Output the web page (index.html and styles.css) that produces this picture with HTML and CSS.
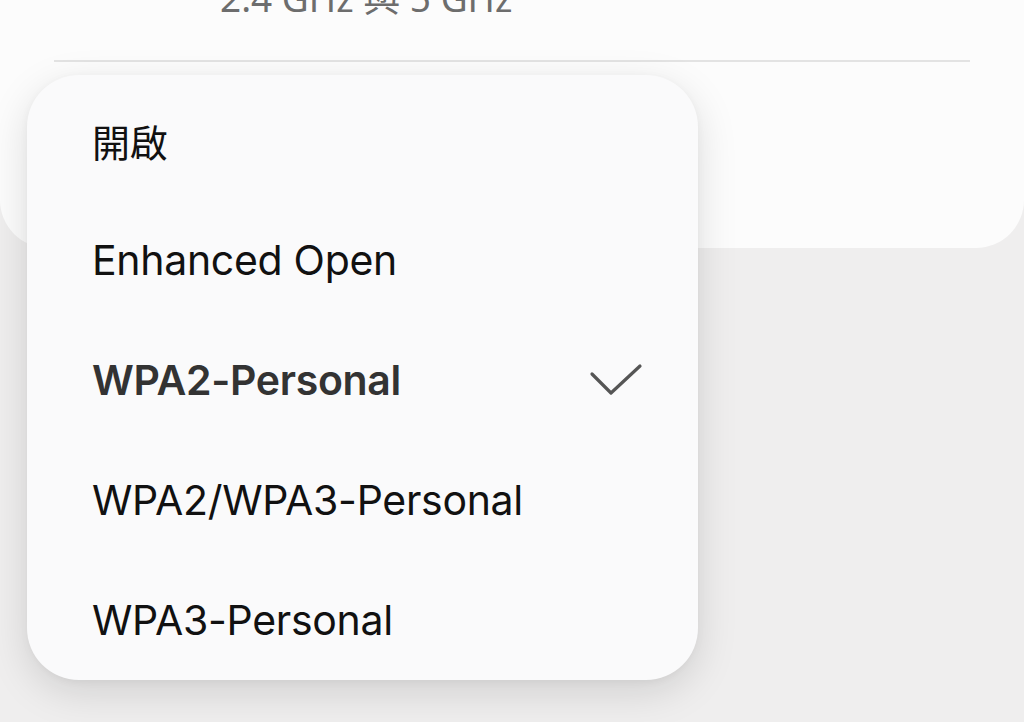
FILE: index.html
```html
<!DOCTYPE html>
<html lang="zh-Hant">
<head>
<meta charset="utf-8">
<title>安全性</title>
<link rel="stylesheet" href="styles.css">
</head>
<body>
<div class="page">
  <section class="card">
    <div class="card-sub">2.4 GHz 與 5 GHz</div>
    <div class="divider"></div>
    <div class="card-row"></div>
  </section>

  <div class="menu">
    <div class="menu-item cjk">開啟</div>
    <div class="menu-item">Enhanced Open</div>
    <div class="menu-item selected">
      <span>WPA2-Personal</span>
      <svg class="check" width="54" height="34" viewBox="0 0 54 34" fill="none">
        <path d="M3 11 L22 30 L51 3" stroke="#555" stroke-width="3.2" stroke-linecap="round" stroke-linejoin="round"/>
      </svg>
    </div>
    <div class="menu-item">WPA2/WPA3-Personal</div>
    <div class="menu-item">WPA3-Personal</div>
  </div>
</div>
</body>
</html>
```

FILE: styles.css
```css
html, body {
  margin: 0;
  padding: 0;
}

body {
  background: #efeeee;
  font-family: Inter, "Noto Sans CJK TC", sans-serif;
  width: 1024px;
  height: 722px;
  overflow: hidden;
}

.page {
  position: relative;
  width: 1024px;
  height: 722px;
}

.card {
  display: flow-root;
  background: #fcfcfc;
  border-radius: 0 0 48px 48px;
  height: 248px;
}

.card-sub {
  margin: -25px 0 0 220px;
  font-size: 37px;
  line-height: 46px;
  color: #6d6d6d;
  font-family: "Noto Sans", "Noto Sans CJK TC", sans-serif;
}

.divider {
  margin: 39px 54px 0 54px;
  height: 2px;
  background: #e3e3e3;
}

.card-row {
  height: 180px;
}

.menu {
  position: absolute;
  left: 27px;
  top: 75px;
  width: 671px;
  height: 605px;
  box-sizing: border-box;
  padding-top: 5px;
  background: #fafafb;
  border-radius: 52px;
  box-shadow: 0 12px 40px rgba(0, 0, 0, 0.13), 0 2px 8px rgba(0, 0, 0, 0.04);
  display: flex;
  flex-direction: column;
}

.menu-item {
  height: 120px;
  display: flex;
  align-items: center;
  justify-content: space-between;
  padding: 0 55px 0 65px;
  font-size: 41px;
  color: #111;
  letter-spacing: -0.3px;
}

.menu-item.cjk {
  font-family: "Noto Sans CJK TC", sans-serif;
  font-size: 38px;
}

.menu-item.selected {
  font-weight: 600;
  color: #333;
}

.check {
  display: block;
}
```
